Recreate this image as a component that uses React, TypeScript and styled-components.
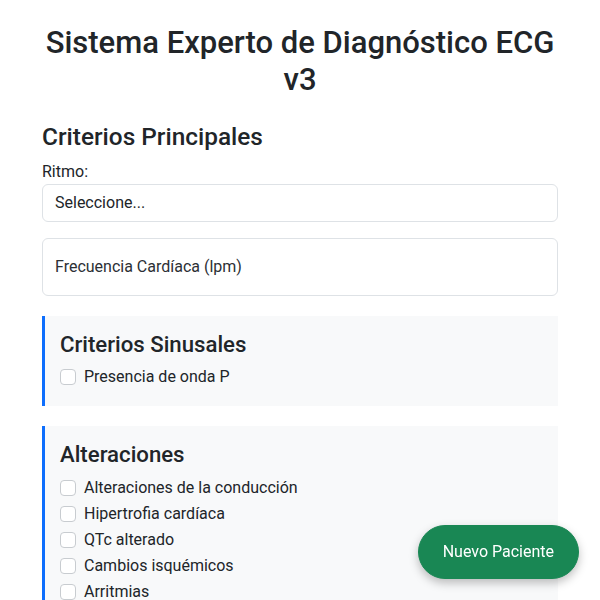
import styled, { createGlobalStyle } from 'styled-components';

const GlobalStyle = createGlobalStyle`
  * {
    box-sizing: border-box;
  }

  body {
    margin: 0;
    font-family: Roboto, "Liberation Sans", sans-serif;
    font-size: 16px;
    line-height: 1.5;
    color: #212529;
    background-color: #fff;
  }
`;

const Container = styled.div`
  max-width: 540px;
  margin: 0 auto;
  padding: 24px 12px 40px;
`;

const Title = styled.h1`
  margin: 0 0 24px;
  font-size: 31px;
  font-weight: 500;
  line-height: 1.2;
  text-align: center;
`;

const SectionTitle = styled.h3`
  margin: 0 0 8px;
  font-size: 24.4px;
  font-weight: 500;
  line-height: 1.2;
`;

const FieldLabel = styled.label`
  display: inline-block;
`;

const SelectField = styled.select`
  display: block;
  width: 100%;
  height: 38px;
  margin-bottom: 16px;
  padding: 6px 12px;
  font-family: inherit;
  font-size: 16px;
  color: #212529;
  background-color: #fff;
  border: 1px solid #dee2e6;
  border-radius: 6px;
  appearance: none;
`;

const FloatingField = styled.div`
  position: relative;
  margin-bottom: 16px;
`;

const FloatingInput = styled.input`
  display: block;
  width: 100%;
  height: 58px;
  padding: 16px 12px;
  font-family: inherit;
  font-size: 16px;
  border: 1px solid #dee2e6;
  border-radius: 6px;

  &::placeholder {
    color: transparent;
  }
`;

const FloatingLabel = styled.label`
  position: absolute;
  top: 0;
  left: 0;
  height: 100%;
  padding: 17px 13px 15px;
  color: #2c3035;
  pointer-events: none;
`;

const CriteriaBox = styled.section`
  margin: 20px 0;
  padding: 15px;
  background-color: #f8f9fa;
  border-left: 3px solid #0d6efd;
`;

const BoxTitle = styled.h4`
  margin: 0 0 8px;
  font-size: 22.2px;
  font-weight: 500;
  line-height: 1.2;
`;

const CheckRow = styled.label`
  display: flex;
  align-items: flex-start;
  gap: 8px;
  min-height: 24px;
  margin-bottom: 2px;
`;

const CheckInput = styled.input`
  width: 16px;
  height: 16px;
  margin: 4px 0 0;
  flex-shrink: 0;
  appearance: none;
  background-color: #fff;
  border: 1px solid #c8ccd0;
  border-radius: 4px;

  &:checked {
    background-color: #0d6efd;
    border-color: #0d6efd;
  }
`;

const FloatingButton = styled.button`
  position: fixed;
  right: 21px;
  bottom: 21px;
  padding: 14px 24px;
  font-family: inherit;
  font-size: 16px;
  line-height: 1.5;
  color: #fff;
  background-color: #198754;
  border: 1px solid #198754;
  border-radius: 50px;
  box-shadow: 0 4px 10px rgba(0, 0, 0, 0.25);
  cursor: pointer;
`;

const sinusal = ['Presencia de onda P'];

const alteraciones = [
  'Alteraciones de la conducción',
  'Hipertrofia cardíaca',
  'QTc alterado',
  'Cambios isquémicos',
  'Arritmias',
];

function CheckList({ items }: { items: string[] }) {
  return (
    <>
      {items.map((item) => (
        <CheckRow key={item}>
          <CheckInput type="checkbox" />
          <span>{item}</span>
        </CheckRow>
      ))}
    </>
  );
}

export default function App() {
  return (
    <>
      <GlobalStyle />
      <Container>
        <Title>Sistema Experto de Diagnóstico ECG v3</Title>

        <SectionTitle>Criterios Principales</SectionTitle>
        <FieldLabel htmlFor="ritmo">Ritmo:</FieldLabel>
        <SelectField id="ritmo" defaultValue="">
          <option value="">Seleccione...</option>
          <option value="sinusal">Sinusal</option>
          <option value="no-sinusal">No sinusal</option>
        </SelectField>

        <FloatingField>
          <FloatingInput id="fc" type="number" placeholder="Frecuencia Cardíaca (lpm)" />
          <FloatingLabel htmlFor="fc">Frecuencia Cardíaca (lpm)</FloatingLabel>
        </FloatingField>

        <CriteriaBox>
          <BoxTitle>Criterios Sinusales</BoxTitle>
          <CheckList items={sinusal} />
        </CriteriaBox>

        <CriteriaBox>
          <BoxTitle>Alteraciones</BoxTitle>
          <CheckList items={alteraciones} />
        </CriteriaBox>
      </Container>
      <FloatingButton>Nuevo Paciente</FloatingButton>
    </>
  );
}
